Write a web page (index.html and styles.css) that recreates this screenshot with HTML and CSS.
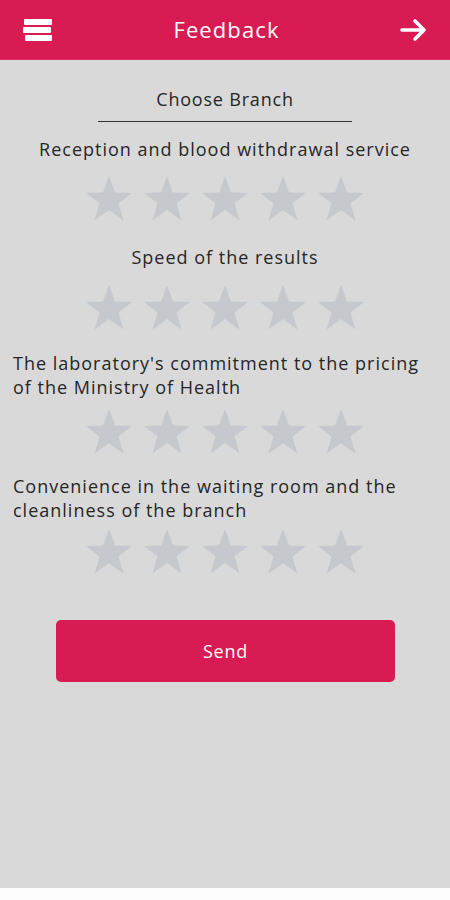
FILE: index.html
```html
<!DOCTYPE html>
<html>
<head>
<meta charset="utf-8">
<link rel="stylesheet" href="styles.css">
</head>
<body>
<div class="screen">
  <header class="topbar">
    <svg class="menu-icon" width="30" height="28" viewBox="0 0 30 28">
      <rect x="1" y="2" width="28" height="6" rx="1" fill="#fff"/>
      <rect x="0" y="10" width="28" height="6" rx="1" fill="#fff"/>
      <rect x="2" y="18" width="27" height="6" rx="1" fill="#fff"/>
    </svg>
    <h1 class="title">Feedback</h1>
    <svg class="arrow-icon" width="28" height="24" viewBox="0 0 28 24">
      <path d="M2 12 H24 M15 3 L24 12 L15 21" fill="none" stroke="#fff" stroke-width="3.6" stroke-linecap="round" stroke-linejoin="round"/>
    </svg>
  </header>
  <main class="content">
    <div class="branch">Choose Branch</div>
    <section class="question">
      <p class="q-text center">Reception and blood withdrawal service</p>
      <div class="stars">
        <svg class="star" viewBox="0 0 48 48"><polygon points="24,1 30,17.5 47,18 33.5,28.5 38.5,45.5 24,35 9.5,45.5 14.5,28.5 1,18 18,17.5"/></svg>
        <svg class="star" viewBox="0 0 48 48"><polygon points="24,1 30,17.5 47,18 33.5,28.5 38.5,45.5 24,35 9.5,45.5 14.5,28.5 1,18 18,17.5"/></svg>
        <svg class="star" viewBox="0 0 48 48"><polygon points="24,1 30,17.5 47,18 33.5,28.5 38.5,45.5 24,35 9.5,45.5 14.5,28.5 1,18 18,17.5"/></svg>
        <svg class="star" viewBox="0 0 48 48"><polygon points="24,1 30,17.5 47,18 33.5,28.5 38.5,45.5 24,35 9.5,45.5 14.5,28.5 1,18 18,17.5"/></svg>
        <svg class="star" viewBox="0 0 48 48"><polygon points="24,1 30,17.5 47,18 33.5,28.5 38.5,45.5 24,35 9.5,45.5 14.5,28.5 1,18 18,17.5"/></svg>
      </div>
    </section>
    <section class="question q2">
      <p class="q-text center">Speed of the results</p>
      <div class="stars">
        <svg class="star" viewBox="0 0 48 48"><polygon points="24,1 30,17.5 47,18 33.5,28.5 38.5,45.5 24,35 9.5,45.5 14.5,28.5 1,18 18,17.5"/></svg>
        <svg class="star" viewBox="0 0 48 48"><polygon points="24,1 30,17.5 47,18 33.5,28.5 38.5,45.5 24,35 9.5,45.5 14.5,28.5 1,18 18,17.5"/></svg>
        <svg class="star" viewBox="0 0 48 48"><polygon points="24,1 30,17.5 47,18 33.5,28.5 38.5,45.5 24,35 9.5,45.5 14.5,28.5 1,18 18,17.5"/></svg>
        <svg class="star" viewBox="0 0 48 48"><polygon points="24,1 30,17.5 47,18 33.5,28.5 38.5,45.5 24,35 9.5,45.5 14.5,28.5 1,18 18,17.5"/></svg>
        <svg class="star" viewBox="0 0 48 48"><polygon points="24,1 30,17.5 47,18 33.5,28.5 38.5,45.5 24,35 9.5,45.5 14.5,28.5 1,18 18,17.5"/></svg>
      </div>
    </section>
    <section class="question q3">
      <p class="q-text">The laboratory's commitment to the pricing of the Ministry of Health</p>
      <div class="stars">
        <svg class="star" viewBox="0 0 48 48"><polygon points="24,1 30,17.5 47,18 33.5,28.5 38.5,45.5 24,35 9.5,45.5 14.5,28.5 1,18 18,17.5"/></svg>
        <svg class="star" viewBox="0 0 48 48"><polygon points="24,1 30,17.5 47,18 33.5,28.5 38.5,45.5 24,35 9.5,45.5 14.5,28.5 1,18 18,17.5"/></svg>
        <svg class="star" viewBox="0 0 48 48"><polygon points="24,1 30,17.5 47,18 33.5,28.5 38.5,45.5 24,35 9.5,45.5 14.5,28.5 1,18 18,17.5"/></svg>
        <svg class="star" viewBox="0 0 48 48"><polygon points="24,1 30,17.5 47,18 33.5,28.5 38.5,45.5 24,35 9.5,45.5 14.5,28.5 1,18 18,17.5"/></svg>
        <svg class="star" viewBox="0 0 48 48"><polygon points="24,1 30,17.5 47,18 33.5,28.5 38.5,45.5 24,35 9.5,45.5 14.5,28.5 1,18 18,17.5"/></svg>
      </div>
    </section>
    <section class="question q4">
      <p class="q-text">Convenience in the waiting room and the cleanliness of the branch</p>
      <div class="stars">
        <svg class="star" viewBox="0 0 48 48"><polygon points="24,1 30,17.5 47,18 33.5,28.5 38.5,45.5 24,35 9.5,45.5 14.5,28.5 1,18 18,17.5"/></svg>
        <svg class="star" viewBox="0 0 48 48"><polygon points="24,1 30,17.5 47,18 33.5,28.5 38.5,45.5 24,35 9.5,45.5 14.5,28.5 1,18 18,17.5"/></svg>
        <svg class="star" viewBox="0 0 48 48"><polygon points="24,1 30,17.5 47,18 33.5,28.5 38.5,45.5 24,35 9.5,45.5 14.5,28.5 1,18 18,17.5"/></svg>
        <svg class="star" viewBox="0 0 48 48"><polygon points="24,1 30,17.5 47,18 33.5,28.5 38.5,45.5 24,35 9.5,45.5 14.5,28.5 1,18 18,17.5"/></svg>
        <svg class="star" viewBox="0 0 48 48"><polygon points="24,1 30,17.5 47,18 33.5,28.5 38.5,45.5 24,35 9.5,45.5 14.5,28.5 1,18 18,17.5"/></svg>
      </div>
    </section>
    <button class="send">Send</button>
  </main>
  <div class="bottom"></div>
</div>
</body>
</html>
```
FILE: styles.css
```css
* { box-sizing: border-box; }
html, body { margin: 0; padding: 0; }
body {
  width: 450px;
  height: 900px;
  font-family: "Open Sans", "DejaVu Sans", sans-serif;
  color: #262626;
  background: #fdfdfd;
}
.screen {
  display: flex;
  flex-direction: column;
  height: 900px;
}
.topbar {
  height: 60px;
  background: #d81b52;
  display: flex;
  align-items: center;
  justify-content: space-between;
  padding: 0 22px 0 23px;
  border-bottom: 1px solid #e0305e;
}
.menu-icon { display: block; margin-top: 2px; }
.arrow-icon { display: block; margin-top: 0; }
.title {
  margin: 0;
  font-size: 22px;
  font-weight: 400;
  color: #fff;
  letter-spacing: 1.1px;
  margin-top: -2px;
}
.content {
  background: #d9d9d9;
  height: 828px;
  display: flex;
  flex-direction: column;
}
.branch {
  align-self: center;
  width: 254px;
  margin-top: 26px;
  padding-bottom: 9px;
  text-align: center;
  font-size: 18px;
  line-height: 26px;
  letter-spacing: 0.8px;
  border-bottom: 1.5px solid #333;
}
.question { display: flex; flex-direction: column; }
.q-text {
  margin: 0;
  font-size: 18px;
  line-height: 24px;
  letter-spacing: 1px;
  padding: 0 20px 0 13px;
}
.center { text-align: center; padding: 0 8px; }
.question:first-of-type .q-text { margin-top: 15px; }
.q2 .q-text { margin-top: 22px; }
.q3 .q-text { margin-top: 19px; }
.q4 .q-text { margin-top: 18px; }
.stars {
  display: flex;
  justify-content: center;
  gap: 10px;
  margin-top: 14px;
}
.q2 .stars { margin-top: 15px; }
.q3 .stars { margin-top: 9px; }
.q4 .stars { margin-top: 6px; }
.star {
  width: 48px;
  height: 48px;
  fill: #c5c9cd;
}
.send {
  align-self: center;
  margin-top: 44px;
  margin-left: 1px;
  width: 339px;
  height: 62px;
  border: none;
  border-radius: 5px;
  background: #d81b52;
  color: #fff;
  font-family: inherit;
  font-size: 18px;
  letter-spacing: 0.8px;
}
.bottom { flex: 1; background: #fdfdfd; }
```
